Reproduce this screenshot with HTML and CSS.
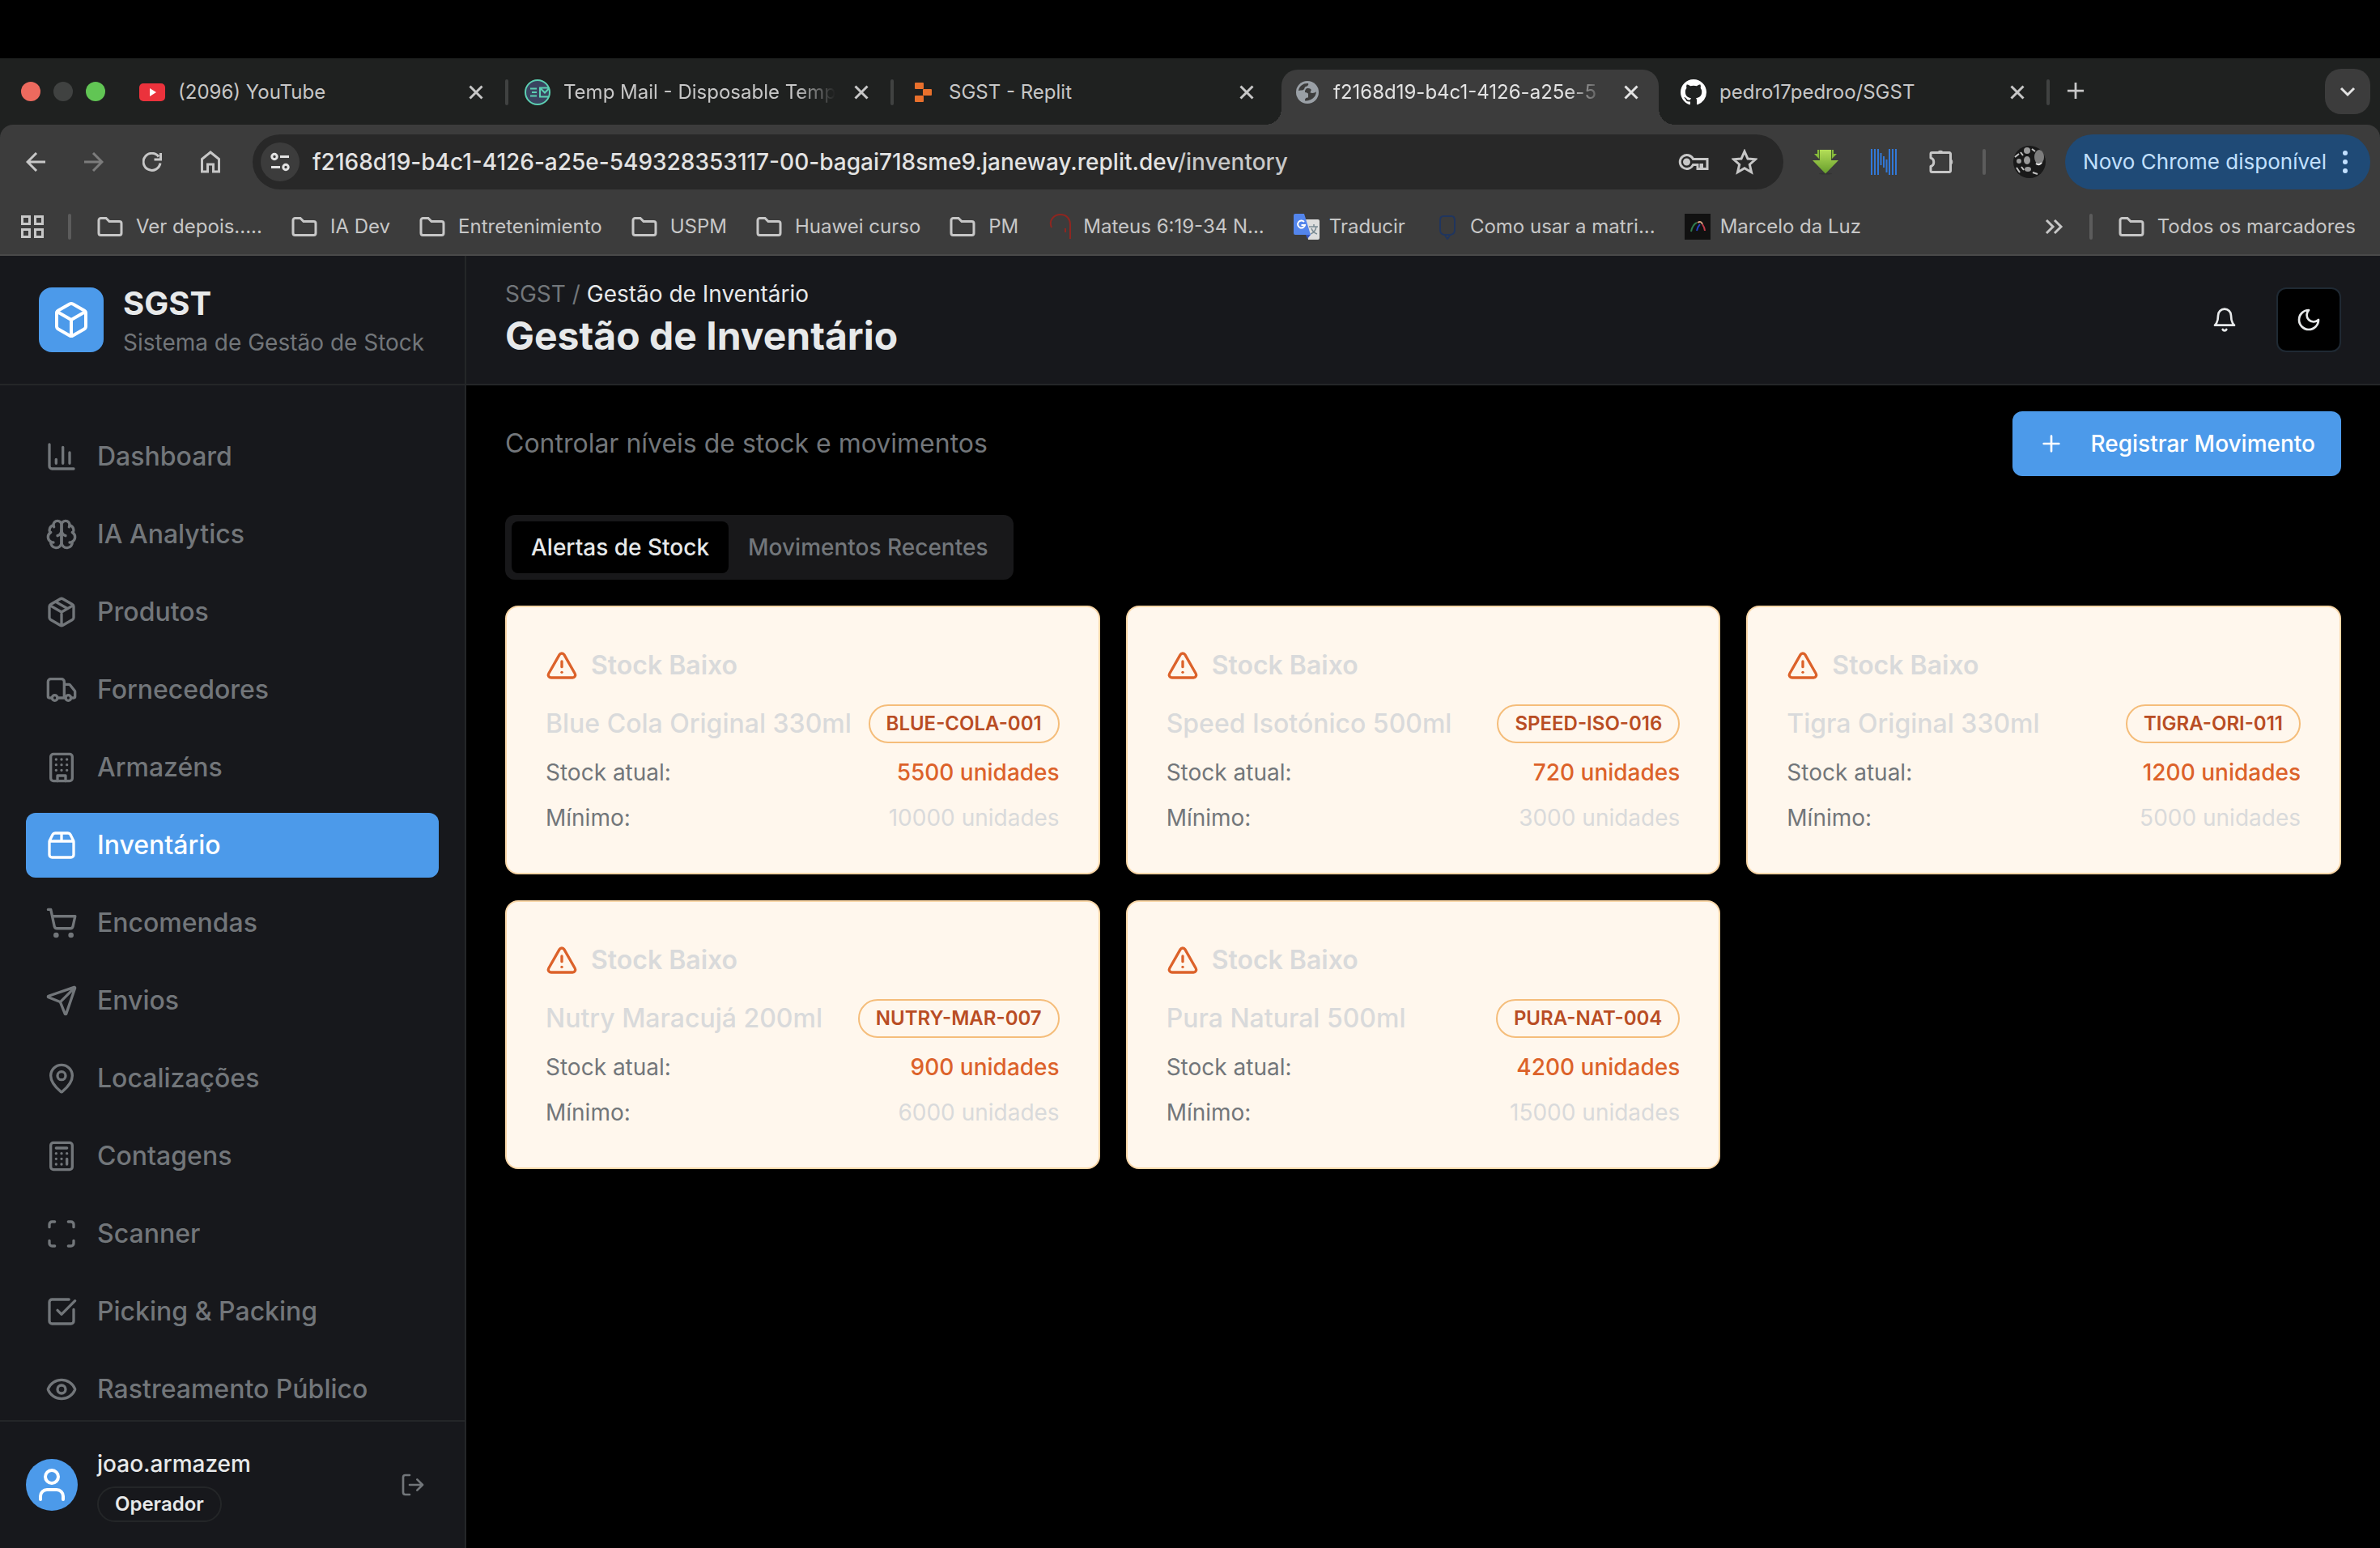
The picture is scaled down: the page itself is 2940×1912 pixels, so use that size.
FILE: index.html
```html
<!DOCTYPE html>
<html lang="pt">
<head>
<meta charset="utf-8">
<title>SGST - Gestão de Inventário</title>
<link rel="stylesheet" href="styles.css">
</head>
<body>
<svg class="defs" aria-hidden="true">
  <symbol id="i-close" viewBox="0 0 24 24"><path d="M4.500 4.500l15 15M19.500 4.500l-15 15"/></symbol>
  <symbol id="i-folder" viewBox="0 0 32 24"><path d="M2 20V4a2.500 2.500 0 0 1 2.500-2.500H11l4 4h12.500A2.500 2.500 0 0 1 30 8v12a2.500 2.500 0 0 1-2.500 2.500h-23A2.500 2.500 0 0 1 2 20z"/></symbol>
  <symbol id="i-box" viewBox="0 0 24 24"><path d="M21 8a2 2 0 0 0-1-1.730l-7-4a2 2 0 0 0-2 0l-7 4A2 2 0 0 0 3 8v8a2 2 0 0 0 1 1.730l7 4a2 2 0 0 0 2 0l7-4A2 2 0 0 0 21 16Z"/><path d="m3.300 7 8.700 5 8.700-5"/><path d="M12 22V12"/></symbol>
  <symbol id="i-alert" viewBox="0 0 24 24"><path d="m21.730 18-8-14a2 2 0 0 0-3.480 0l-8 14A2 2 0 0 0 4 21h16a2 2 0 0 0 1.730-3"/><path d="M12 9v4"/><path d="M12 17h.01"/></symbol>
</svg>

<div class="browser">
  <div class="tabstrip">
    <div class="lights"><span class="light red"></span><span class="light gray"></span><span class="light green"></span></div>
    <div class="tabs">
      <div class="tab">
        <svg class="fav" viewBox="0 0 32 32"><rect y="5" width="32" height="22" rx="5" fill="#eb323c"/><path d="M13 11l8 5-8 5z" fill="#fff"/></svg>
        <span class="tab-title">(2096) YouTube</span>
        <button class="tab-close" aria-label="Fechar"><svg class="icon"><use href="#i-close"/></svg></button>
      </div>
      <div class="tab">
        <svg class="fav" viewBox="0 0 32 32" fill="none" stroke="#5cd0b3" stroke-width="2"><circle cx="16" cy="16" r="15" fill="#3a4460"/><path d="M30 10.500H19v11h11M19 10.500l6 6 5-5M7 11.500h8M9 16h6M7 20.500h8"/></svg>
        <span class="tab-title fade">Temp Mail - Disposable Temp</span>
        <button class="tab-close" aria-label="Fechar"><svg class="icon"><use href="#i-close"/></svg></button>
      </div>
      <div class="tab">
        <svg class="fav" viewBox="0 0 32 32" fill="#e8702c"><rect x="6" y="4" width="11" height="8" rx="1"/><rect x="16" y="12" width="11" height="8" rx="1"/><rect x="6" y="20" width="11" height="8" rx="1"/></svg>
        <span class="tab-title">SGST - Replit</span>
        <button class="tab-close" aria-label="Fechar"><svg class="icon"><use href="#i-close"/></svg></button>
      </div>
      <div class="tab active">
        <svg class="fav" viewBox="0 0 32 32"><circle cx="16" cy="16" r="14" fill="#9aa0a6"/><path d="M5 14C6 8 11 4.500 17 5c1 2-1 3.500-3 4-2 .5-1 3-3 4-2 .8-4 .5-6 1z" fill="#3c3c3c"/><path d="M17 11c2 0 4 1 4 3h6c0 5-2 8-5 10-3 2-6 2.500-9 2.500 0-3 1-4 4-4v-4c0-2-2-2-4-2.500 0-3 1-5 4-5z" fill="#3c3c3c"/><path d="M20 15c3 1 5 0 6.500-1" fill="none" stroke="#9aa0a6" stroke-width="3"/></svg>
        <span class="tab-title fade">f2168d19-b4c1-4126-a25e-5</span>
        <button class="tab-close" aria-label="Fechar"><svg class="icon"><use href="#i-close"/></svg></button>
      </div>
      <div class="tab">
        <svg class="fav" viewBox="0 0 16 16" fill="#fff"><path d="M8 0C3.580 0 0 3.580 0 8c0 3.540 2.290 6.530 5.470 7.590.4.070.55-.17.55-.38 0-.19-.01-.82-.01-1.490-2.010.37-2.530-.49-2.690-.94-.09-.23-.48-.94-.82-1.130-.28-.15-.68-.52-.01-.53.63-.01 1.080.58 1.230.82.72 1.210 1.870.87 2.330.66.07-.52.28-.87.51-1.070-1.780-.2-3.640-.89-3.640-3.950 0-.87.31-1.590.82-2.150-.08-.2-.36-1.020.08-2.120 0 0 .67-.21 2.200.82.64-.18 1.320-.27 2-.27s1.360.09 2 .27c1.530-1.040 2.200-.82 2.200-.82.44 1.100.16 1.920.08 2.120.51.56.82 1.270.82 2.150 0 3.070-1.870 3.750-3.650 3.950.29.25.54.73.54 1.480 0 1.070-.01 1.930-.01 2.200 0 .21.15.46.55.38A8.010 8.010 0 0 0 16 8c0-4.420-3.580-8-8-8z"/></svg>
        <span class="tab-title">pedro17pedroo/SGST</span>
        <button class="tab-close" aria-label="Fechar"><svg class="icon"><use href="#i-close"/></svg></button>
      </div>
      <button class="new-tab" aria-label="Nova aba"><svg class="icon" viewBox="0 0 24 24"><path d="M12 1v22M1 12h22"/></svg></button>
    </div>
    <button class="tab-list" aria-label="Pesquisar abas"><svg class="icon" viewBox="0 0 24 24"><path d="M4 8l8 8 8-8"/></svg></button>
  </div>

  <div class="toolbar">
    <button class="tool" aria-label="Voltar"><svg class="icon" viewBox="0 0 24 24"><path d="M24 12H2M13 1L2 12l11 11"/></svg></button>
    <button class="tool dim" aria-label="Avançar"><svg class="icon" viewBox="0 0 24 24"><path d="M0 12h22M11 1l11 11-11 11"/></svg></button>
    <button class="tool" aria-label="Recarregar"><svg class="icon" viewBox="0 0 24 24"><path d="M22 13.500A10.500 10.500 0 1 1 20 5.500M22.500 1v8h-8"/></svg></button>
    <button class="tool" aria-label="Início"><svg class="icon home" viewBox="0 0 24 28"><path d="M1.500 26V10.500L12 2l10.500 8.500V26H15.500v-9h-7v9z"/></svg></button>
    <div class="omnibox">
      <button class="site-info" aria-label="Informações do site"><svg class="icon" viewBox="0 0 24 24"><circle cx="5" cy="5.500" r="3.200"/><path d="M12 5.500h11M1 18.500h11"/><circle cx="19" cy="18.500" r="3.200"/></svg></button>
      <p class="url">f2168d19-b4c1-4126-a25e-549328353117-00-bagai718sme9.janeway.replit.dev<span class="path">/inventory</span></p>
      <button class="omni-btn" aria-label="Senhas"><svg class="icon key" viewBox="0 0 38 24"><path d="M18.500 8.500a8.500 8.500 0 1 0 0 7H24v5h4v-5h1.500v5H36V8.500z"/><circle cx="10.500" cy="12" r="3" fill="currentColor"/></svg></button>
      <button class="omni-btn" aria-label="Favoritar"><svg class="icon star" viewBox="0 0 32 32"><path d="M16 3l4 9 9.500.8-7.200 6.400 2.200 9.500L16 23.700l-8.500 5 2.200-9.500-7.200-6.400L12 12z"/></svg></button>
    </div>
    <div class="extensions">
      <svg class="ext" viewBox="0 0 32 32"><defs><linearGradient id="arrow-fill" x1="0" y1="0" x2="0" y2="1"><stop offset="0" stop-color="#b4de58"/><stop offset="1" stop-color="#679e2c"/></linearGradient></defs><ellipse cx="16" cy="30.500" rx="8" ry="1" fill="#333"/><path d="M6 1h20v5h4l-6 6H8L2 6h4z" fill="#86bb3b"/><path d="M9 1h14v13h9L16 30.500 0 14h9z" fill="url(#arrow-fill)"/><path d="M8.500 1v12M23.500 1v12" stroke="#46602a" stroke-width="1"/></svg>
      <svg class="ext" viewBox="0 0 32 32" stroke="#3178d8" stroke-width="2"><path d="M1 0v32M5 0v32M9 0v32M12.500 5v15M16 9v14M19.500 13v16M23 0v32M27 0v32M31 0v32"/></svg>
      <svg class="ext" viewBox="0 0 32 32" fill="none" stroke="#c7c7c7" stroke-width="3" stroke-linejoin="round"><path d="M3.500 4.500H25a1.500 1.500 0 0 1 1.500 1.500v21a1.500 1.500 0 0 1-1.500 1.500H3.500A1.500 1.500 0 0 1 2 27v-5.500c5-1.500 5-9 0-10.500V6a1.500 1.500 0 0 1 1.500-1.500z"/><path d="M10.500 4a4 3.500 0 0 1 7 0zM27 12.500a3.500 4 0 0 1 0 7z" fill="#c7c7c7" stroke-width="1"/></svg>
      <span class="sep"></span>
      <svg class="avatar" viewBox="0 0 40 40"><circle cx="20" cy="20" r="20" fill="#191919"/><g fill="#9a9a9a"><circle cx="17" cy="6" r="4"/><ellipse cx="17" cy="18" rx="4" ry="5"/><ellipse cx="32" cy="14" rx="6" ry="9" fill="#7d7d7d"/><circle cx="7" cy="19" r="3"/><ellipse cx="18" cy="29" rx="4" ry="3"/></g><path d="M28 22q4 3 7-1" stroke="#eee" stroke-width="2" fill="none"/><path d="M2 14l5-4M9 8l3 4M10 26l3 4M23 4l4 3M4 27l4 6M24 33l6 2" stroke="#c4c4c4" stroke-width="2" fill="none"/></svg>
    </div>
    <button class="update">Novo Chrome disponível<svg class="dots" viewBox="0 0 6 30" fill="currentColor"><circle cx="3" cy="4" r="3"/><circle cx="3" cy="15" r="3"/><circle cx="3" cy="26" r="3"/></svg></button>
  </div>

  <nav class="bookmarks" aria-label="Marcadores">
    <button class="apps" aria-label="Apps"><svg class="icon" viewBox="0 0 28 28"><path d="M1.500 1.500h9v9h-9zM17.500 1.500h9v9h-9zM1.500 17.500h9v9h-9zM17.500 17.500h9v9h-9z"/></svg></button>
    <span class="sep"></span>
    <div class="marks">
      <a href="#"><svg class="folder"><use href="#i-folder"/></svg>Ver depois.....</a>
      <a href="#"><svg class="folder"><use href="#i-folder"/></svg>IA Dev</a>
      <a href="#"><svg class="folder"><use href="#i-folder"/></svg>Entretenimiento</a>
      <a href="#"><svg class="folder"><use href="#i-folder"/></svg>USPM</a>
      <a href="#"><svg class="folder"><use href="#i-folder"/></svg>Huawei curso</a>
      <a href="#"><svg class="folder"><use href="#i-folder"/></svg>PM</a>
      <a href="#"><svg class="fav" viewBox="0 0 32 32" fill="none" stroke="#8f2620" stroke-width="2"><path d="M5 17C1 8 8 1 16 1c8 0 12 6 12 12v18M22 18v5"/></svg>Mateus 6:19-34 N...</a>
      <a href="#"><svg class="fav" viewBox="0 0 32 32"><path d="M14 7h16a2 2 0 0 1 2 2v21a2 2 0 0 1-2 2H18z" fill="#dedede"/><path d="M2 0h11l8 26H2a2 2 0 0 1-2-2V2a2 2 0 0 1 2-2z" fill="#5385ec"/><path d="M15 26h6l-4 5z" fill="#3355c0"/><path d="M13 10a4.500 4.500 0 1 0 1 4H9.500" fill="none" stroke="#fff" stroke-width="2"/><path d="M19 16h11M25 13v3M28 16c-1 5-4 8-7 9M22 18c1 3 4 6 7 7" fill="none" stroke="#7a8b94" stroke-width="1.500"/></svg>Traducir</a>
      <a href="#"><svg class="fav" viewBox="0 0 32 32" fill="none" stroke="#20355e" stroke-width="2"><path d="M11 3h10q4 0 4 5v12q0 5-5 6h-8q-5-1-5-6V8q0-5 4-5z"/><path d="M13 27l3 4 3-4"/></svg>Como usar a matri...</a>
      <a href="#"><svg class="fav" viewBox="0 0 32 32" fill="none" stroke-width="2"><rect width="32" height="32" fill="#111"/><path d="M8 22c1-5 3-9 7-11" stroke="#2f7a4d"/><path d="M15 21c1-4 2-6 4-8" stroke="#2440c0"/><path d="M16 11c3-2 5-1 6 2" stroke="#d8a080"/><path d="M22 13c2 3 3 5 3 8" stroke="#c03a4a"/></svg>Marcelo da Luz</a>
    </div>
    <div class="marks-end">
      <button class="more" aria-label="Mais"><svg class="icon" viewBox="0 0 24 24"><path d="M3 4l8 8-8 8M13 4l8 8-8 8"/></svg></button>
      <span class="sep"></span>
      <a href="#"><svg class="folder"><use href="#i-folder"/></svg>Todos os marcadores</a>
    </div>
  </nav>
</div>

<div class="app">
  <aside class="sidebar">
    <div class="brand">
      <span class="logo"><svg class="icon"><use href="#i-box"/></svg></span>
      <div><p class="brand-name">SGST</p><p class="brand-sub">Sistema de Gestão de Stock</p></div>
    </div>
    <nav class="menu" aria-label="Principal">
      <a href="#"><svg class="icon" viewBox="0 0 24 24"><path d="M3 3v16a2 2 0 0 0 2 2h16M18 17V9M13 17V5M8 17v-3"/></svg>Dashboard</a>
      <a href="#"><svg class="icon" viewBox="0 0 24 24"><path d="M12 5a3 3 0 1 0-5.997.125 4 4 0 0 0-2.526 5.770 4 4 0 0 0 .556 6.588A4 4 0 1 0 12 18Z"/><path d="M12 5a3 3 0 1 1 5.997.125 4 4 0 0 1 2.526 5.770 4 4 0 0 1-.556 6.588A4 4 0 1 1 12 18Z"/><path d="M15 13a4.500 4.500 0 0 1-3-4 4.500 4.500 0 0 1-3 4M17.599 6.500a3 3 0 0 0 .399-1.375M6.003 5.125A3 3 0 0 0 6.401 6.500M3.477 10.896a4 4 0 0 1 .585-.396M19.938 10.500a4 4 0 0 1 .585.396M6 18a4 4 0 0 1-1.967-.516M19.967 17.484A4 4 0 0 1 18 18"/></svg>IA Analytics</a>
      <a href="#"><svg class="icon" viewBox="0 0 24 24"><path d="M11 21.730a2 2 0 0 0 2 0l7-4A2 2 0 0 0 21 16V8a2 2 0 0 0-1-1.730l-7-4a2 2 0 0 0-2 0l-7 4A2 2 0 0 0 3 8v8a2 2 0 0 0 1 1.730zM12 22V12M3.300 7l8.700 5 8.700-5M7.500 4.270l9 5.150"/></svg>Produtos</a>
      <a href="#"><svg class="icon" viewBox="0 0 24 24"><path d="M14 18V6a2 2 0 0 0-2-2H4a2 2 0 0 0-2 2v11a1 1 0 0 0 1 1h2M15 18H9M19 18h2a1 1 0 0 0 1-1v-3.650a1 1 0 0 0-.22-.624l-3.480-4.350A1 1 0 0 0 17.520 8H14"/><circle cx="17" cy="18" r="2"/><circle cx="7" cy="18" r="2"/></svg>Fornecedores</a>
      <a href="#"><svg class="icon" viewBox="0 0 24 24"><rect width="16" height="20" x="4" y="2" rx="2"/><path d="M9 22v-4h6v4M8 6h.01M16 6h.01M12 6h.01M12 10h.01M12 14h.01M16 10h.01M16 14h.01M8 10h.01M8 14h.01"/></svg>Armazéns</a>
      <a href="#" class="current" aria-current="page"><svg class="icon" viewBox="0 0 24 24"><path d="M12 3v6M16.760 3a2 2 0 0 1 1.800 1.100l2.230 4.479a2 2 0 0 1 .21.891V19a2 2 0 0 1-2 2H5a2 2 0 0 1-2-2V9.472a2 2 0 0 1 .211-.894L5.450 4.100A2 2 0 0 1 7.240 3zM3.054 9.013h17.893"/></svg>Inventário</a>
      <a href="#"><svg class="icon" viewBox="0 0 24 24"><circle cx="8" cy="21" r="1"/><circle cx="19" cy="21" r="1"/><path d="M2.050 2.050h2l2.660 12.420a2 2 0 0 0 2 1.580h9.780a2 2 0 0 0 1.950-1.570l1.650-7.430H5.120"/></svg>Encomendas</a>
      <a href="#"><svg class="icon" viewBox="0 0 24 24"><path d="M14.536 21.686a.5.5 0 0 0 .937-.024l6.500-19a.496.496 0 0 0-.635-.635l-19 6.500a.5.5 0 0 0-.024.937l7.930 3.180a2 2 0 0 1 1.112 1.110zM21.854 2.147l-10.940 10.939"/></svg>Envios</a>
      <a href="#"><svg class="icon" viewBox="0 0 24 24"><path d="M20 10c0 4.993-5.539 10.193-7.399 11.799a1 1 0 0 1-1.202 0C9.539 20.193 4 14.993 4 10a8 8 0 0 1 16 0"/><circle cx="12" cy="10" r="3"/></svg>Localizações</a>
      <a href="#"><svg class="icon" viewBox="0 0 24 24"><rect width="16" height="20" x="4" y="2" rx="2"/><path d="M8 6h8M16 14v4M16 10h.01M12 10h.01M8 10h.01M12 14h.01M8 14h.01M12 18h.01M8 18h.01"/></svg>Contagens</a>
      <a href="#"><svg class="icon" viewBox="0 0 24 24"><path d="M3 7V5a2 2 0 0 1 2-2h2M17 3h2a2 2 0 0 1 2 2v2M21 17v2a2 2 0 0 1-2 2h-2M7 21H5a2 2 0 0 1-2-2v-2"/></svg>Scanner</a>
      <a href="#"><svg class="icon" viewBox="0 0 24 24"><path d="M21 10.500V19a2 2 0 0 1-2 2H5a2 2 0 0 1-2-2V5a2 2 0 0 1 2-2h12.500M9 11l3 3L22 4"/></svg>Picking &amp; Packing</a>
      <a href="#"><svg class="icon" viewBox="0 0 24 24"><path d="M2.062 12.348a1 1 0 0 1 0-.696 10.750 10.750 0 0 1 19.876 0 1 1 0 0 1 0 .696 10.750 10.750 0 0 1-19.876 0"/><circle cx="12" cy="12" r="3"/></svg>Rastreamento Público</a>
    </nav>
    <div class="user">
      <span class="user-pic"><svg class="icon" viewBox="0 0 24 24"><path d="M19 21v-2a4 4 0 0 0-4-4H9a4 4 0 0 0-4 4v2"/><circle cx="12" cy="7" r="4"/></svg></span>
      <div class="user-info"><p class="user-name">joao.armazem</p><span class="role">Operador</span></div>
      <button class="logout" aria-label="Sair"><svg class="icon" viewBox="0 0 24 24"><path d="M9 21H5a2 2 0 0 1-2-2V5a2 2 0 0 1 2-2h4M16 17l5-5-5-5M21 12H9"/></svg></button>
    </div>
  </aside>

  <div class="page">
    <header class="page-head">
      <div>
        <p class="crumbs"><a href="#">SGST</a> / <span>Gestão de Inventário</span></p>
        <h1>Gestão de Inventário</h1>
      </div>
      <div class="head-actions">
        <button class="icon-btn" aria-label="Notificações"><svg class="icon" viewBox="0 0 24 24"><path d="M6 8a6 6 0 0 1 12 0c0 7 3 9 3 9H3s3-2 3-9M10.300 21a1.940 1.940 0 0 0 3.400 0"/></svg></button>
        <button class="icon-btn outlined" aria-label="Tema"><svg class="icon" viewBox="0 0 24 24"><path d="M12 3a6 6 0 0 0 9 9 9 9 0 1 1-9-9Z"/></svg></button>
      </div>
    </header>
    <main>
      <div class="intro">
        <p>Controlar níveis de stock e movimentos</p>
        <button class="primary"><svg class="icon" viewBox="0 0 24 24"><path d="M5 12h14M12 5v14"/></svg>Registrar Movimento</button>
      </div>
      <div class="switch" role="tablist">
        <button role="tab" aria-selected="true" class="on">Alertas de Stock</button>
        <button role="tab" aria-selected="false">Movimentos Recentes</button>
      </div>
      <div class="cards">
        <article class="card">
          <h2><svg class="icon"><use href="#i-alert"/></svg>Stock Baixo</h2>
          <div class="row name"><span>Blue Cola Original 330ml</span><span class="sku">BLUE-COLA-001</span></div>
          <div class="row"><span>Stock atual:</span><span class="now">5500 unidades</span></div>
          <div class="row"><span>Mínimo:</span><span class="min">10000 unidades</span></div>
        </article>
        <article class="card">
          <h2><svg class="icon"><use href="#i-alert"/></svg>Stock Baixo</h2>
          <div class="row name"><span>Speed Isotónico 500ml</span><span class="sku">SPEED-ISO-016</span></div>
          <div class="row"><span>Stock atual:</span><span class="now">720 unidades</span></div>
          <div class="row"><span>Mínimo:</span><span class="min">3000 unidades</span></div>
        </article>
        <article class="card">
          <h2><svg class="icon"><use href="#i-alert"/></svg>Stock Baixo</h2>
          <div class="row name"><span>Tigra Original 330ml</span><span class="sku">TIGRA-ORI-011</span></div>
          <div class="row"><span>Stock atual:</span><span class="now">1200 unidades</span></div>
          <div class="row"><span>Mínimo:</span><span class="min">5000 unidades</span></div>
        </article>
        <article class="card">
          <h2><svg class="icon"><use href="#i-alert"/></svg>Stock Baixo</h2>
          <div class="row name"><span>Nutry Maracujá 200ml</span><span class="sku">NUTRY-MAR-007</span></div>
          <div class="row"><span>Stock atual:</span><span class="now">900 unidades</span></div>
          <div class="row"><span>Mínimo:</span><span class="min">6000 unidades</span></div>
        </article>
        <article class="card">
          <h2><svg class="icon"><use href="#i-alert"/></svg>Stock Baixo</h2>
          <div class="row name"><span>Pura Natural 500ml</span><span class="sku">PURA-NAT-004</span></div>
          <div class="row"><span>Stock atual:</span><span class="now">4200 unidades</span></div>
          <div class="row"><span>Mínimo:</span><span class="min">15000 unidades</span></div>
        </article>
      </div>
    </main>
  </div>
</div>
</body>
</html>
```
FILE: styles.css
```css
:root {
  --chrome: #3c3c3c;
  --strip: #1f2120;
  --chrome-text: #c7c7c7;
  --panel: #17181c;
  --line: #242628;
  --text: #e7e9ea;
  --muted: #72767a;
  --blue: #4c9aea;
}
* { box-sizing: border-box; margin: 0; }
html { height: 100%; }
body {
  height: 100%;
  display: flex;
  flex-direction: column;
  padding-top: 72px;
  overflow: hidden;
  background: #000;
  color: var(--text);
  font: 400 28px/40px Inter, "Liberation Sans", sans-serif;
}
a { color: inherit; text-decoration: none; }
button { padding: 0; border: 0; background: none; color: inherit; font: inherit; display: flex; align-items: center; justify-content: center; }
svg { flex: none; display: block; }
.defs { position: absolute; width: 0; height: 0; }
.icon { width: 32px; height: 32px; fill: none; stroke: currentColor; stroke-width: 2; stroke-linecap: round; stroke-linejoin: round; }

/* Browser frame */
.browser { flex: none; background: var(--strip); color: var(--chrome-text); font-size: 24px; line-height: 32px; white-space: nowrap; }
.browser .icon { width: 24px; height: 24px; stroke-width: 3; stroke-linecap: butt; stroke-linejoin: miter; }
.tabstrip { height: 82px; padding: 0 12px 0 26px; display: flex; align-items: center; }
.lights { display: flex; gap: 16px; width: 124px; flex: none; }
.light { width: 24px; height: 24px; border-radius: 50%; }
.red { background: #ed6a5e; }
.gray { background: #404241; }
.green { background: #61c554; }
.tabs { flex: 1; min-width: 0; display: flex; height: 68px; align-self: flex-end; }
.tab { flex: 0 1 476px; min-width: 0; display: flex; align-items: center; padding: 0 26px 12px 22px; position: relative; }
.tab::after { content: ""; position: absolute; right: -2px; top: 12px; width: 4px; height: 32px; border-radius: 2px; background: #404241; }
.tab:nth-child(3)::after, .tab.active::after { display: none; }
.tab.active { background: var(--chrome); color: #e3e3e3; border-radius: 20px 20px 0 0; padding-left: 16px; padding-right: 22px; flex-basis: 466px; margin: 0 5px 0 5px; }
.tab.active::before { content: ""; position: absolute; left: -20px; right: -20px; bottom: 0; height: 20px; background: radial-gradient(circle at 0 0, transparent 20px, var(--chrome) 20px) left / 20px 20px no-repeat, radial-gradient(circle at 100% 0, transparent 20px, var(--chrome) 20px) right / 20px 20px no-repeat; }
.fav { width: 32px; height: 32px; margin-right: 16px; }
.tab-title { flex: 1; min-width: 0; margin-right: 20px; }
.fade { -webkit-mask-image: linear-gradient(90deg, #000 calc(100% - 48px), transparent); mask-image: linear-gradient(90deg, #000 calc(100% - 48px), transparent); }
.tab-close { width: 24px; height: 24px; }
.new-tab { width: 68px; padding-bottom: 16px; }
.browser .new-tab .icon { width: 22px; height: 22px; }
.tab-list { width: 56px; height: 56px; border-radius: 20px; background: var(--chrome); color: #e3e3e3; }
.browser .tab-list .icon { width: 24px; height: 24px; }

.toolbar { height: 92px; padding: 0 12px 0 32px; display: flex; align-items: center; background: var(--chrome); border-radius: 16px 16px 0 0; }
.tool { width: 24px; height: 48px; margin-right: 48px; }
.tool.dim { color: #7c7c7c; }
.browser .home { height: 28px; }
.omnibox { flex: 1; min-width: 0; height: 68px; margin-left: -8px; padding: 0 32px 0 10px; display: flex; align-items: center; background: #282828; border-radius: 34px; }
.site-info { width: 48px; height: 48px; border-radius: 50%; background: var(--chrome); color: #e3e3e3; }
.url { flex: 1; min-width: 0; margin-left: 16px; overflow: hidden; font-size: 28px; line-height: 40px; font-weight: 500; color: #e3e3e3; }
.path { color: var(--chrome-text); }
.omni-btn { margin-left: 28px; }
.browser .key { width: 38px; }
.browser .star { width: 32px; height: 32px; }
.extensions { display: flex; align-items: center; gap: 40px; margin: 0 24px 0 36px; }
.extensions .sep { margin: 0 -6px; }
.ext { width: 32px; height: 32px; }
.sep { flex: none; width: 4px; height: 32px; border-radius: 2px; background: #5c5c5c; }
.avatar { width: 40px; height: 40px; }
.update { height: 68px; padding: 0 28px 0 22px; gap: 20px; border-radius: 34px; background: #1f4a76; color: #c2e0ff; font-size: 26px; }
.dots { width: 6px; height: 30px; }

.bookmarks { height: 70px; padding: 0 30px 0 26px; display: flex; align-items: center; background: var(--chrome); border-bottom: 2px solid #4a4a4a; }
.browser .apps .icon { width: 28px; height: 28px; }
.apps { margin-right: 30px; }
.marks { flex: 1; min-width: 0; margin-left: 32px; display: flex; gap: 36px; overflow: hidden; }
.marks a, .marks-end a { display: flex; align-items: center; }
.marks .fav { margin-right: 12px; }
.folder { width: 32px; height: 24px; margin-right: 16px; fill: none; stroke: currentColor; stroke-width: 3; }
.marks-end { display: flex; align-items: center; gap: 32px; }

/* Application */
.app { flex: 1; min-height: 0; display: flex; }
.sidebar { width: 576px; flex: none; display: flex; flex-direction: column; background: var(--panel); border-right: 2px solid var(--line); }
.brand { height: 160px; flex: none; padding: 0 48px; display: flex; align-items: center; gap: 24px; border-bottom: 2px solid var(--line); white-space: nowrap; }
.logo { width: 80px; height: 80px; border-radius: 16px; background: var(--blue); color: #fff; display: grid; place-items: center; }
.logo .icon, .user-pic .icon { width: 48px; height: 48px; }
.brand-name { font-size: 40px; line-height: 56px; font-weight: 700; }
.brand-sub { color: var(--muted); }
.menu { flex: 1; min-height: 0; overflow: hidden; padding: 48px 32px 0; display: flex; flex-direction: column; gap: 16px; }
.menu a { flex: none; height: 80px; padding: 0 24px; display: flex; align-items: center; gap: 24px; border-radius: 12px; color: var(--muted); font-size: 32px; font-weight: 500; }
.menu .icon { width: 40px; height: 40px; }
.menu .current { background: var(--blue); color: #fff; }
.user { flex: none; padding: 32px; display: flex; align-items: center; gap: 24px; border-top: 2px solid var(--line); }
.user-pic { width: 64px; height: 64px; border-radius: 50%; background: var(--blue); color: #fff; display: grid; place-items: center; }
.user-info { flex: 1; display: flex; flex-direction: column; align-items: flex-start; gap: 8px; }
.user-name { font-weight: 500; }
.role { padding: 4px 20px; border: 2px solid var(--line); border-radius: 22px; font-size: 24px; line-height: 32px; font-weight: 600; }
.logout { width: 64px; height: 64px; color: var(--muted); }

.page { flex: 1; min-width: 0; }
.page-head { height: 160px; padding: 0 48px; display: flex; align-items: center; justify-content: space-between; background: var(--panel); border-bottom: 2px solid var(--line); }
.crumbs { color: var(--muted); }
.crumbs span { color: var(--text); }
h1 { font-size: 48px; line-height: 64px; font-weight: 700; }
.head-actions { display: flex; gap: 24px; }
.icon-btn { width: 80px; height: 80px; border-radius: 12px; }
.outlined { background: #000; border: 2px solid #1f2933; }
main { padding: 32px 48px; display: flex; flex-direction: column; align-items: flex-start; }
.intro { width: 100%; display: flex; align-items: center; justify-content: space-between; margin-bottom: 48px; color: var(--muted); font-size: 32px; }
.primary { height: 80px; padding: 0 32px; gap: 32px; border-radius: 12px; background: var(--blue); color: #fff; font-size: 28px; font-weight: 500; }
.switch { display: flex; padding: 8px; margin-bottom: 32px; border-radius: 12px; background: #18181a; }
.switch button { height: 64px; padding: 0 24px; border-radius: 8px; color: var(--muted); font-weight: 500; }
.switch .on { background: #000; color: var(--text); }
.cards { width: 100%; display: grid; grid-template-columns: repeat(3, 1fr); gap: 32px; }
.card { padding: 48px; border: 2px solid #fad7a8; border-radius: 16px; background: #fff7ed; color: var(--muted); display: flex; flex-direction: column; gap: 16px; }
.card h2 { display: flex; align-items: center; gap: 16px; margin-bottom: 8px; color: #d9dadb; font-size: 32px; line-height: 48px; font-weight: 600; }
.card .icon { width: 40px; height: 40px; color: #dc622a; }
.row { display: flex; align-items: center; justify-content: space-between; white-space: nowrap; }
.row.name { color: #d9dadb; font-size: 32px; font-weight: 500; }
.sku { padding: 6px 20px; border: 2px solid #f5bd7a; border-radius: 24px; color: #b94d24; font-size: 24px; line-height: 32px; font-weight: 600; }
.now { color: #dc622a; font-weight: 500; }
.min { color: #d9dadb; }
```
